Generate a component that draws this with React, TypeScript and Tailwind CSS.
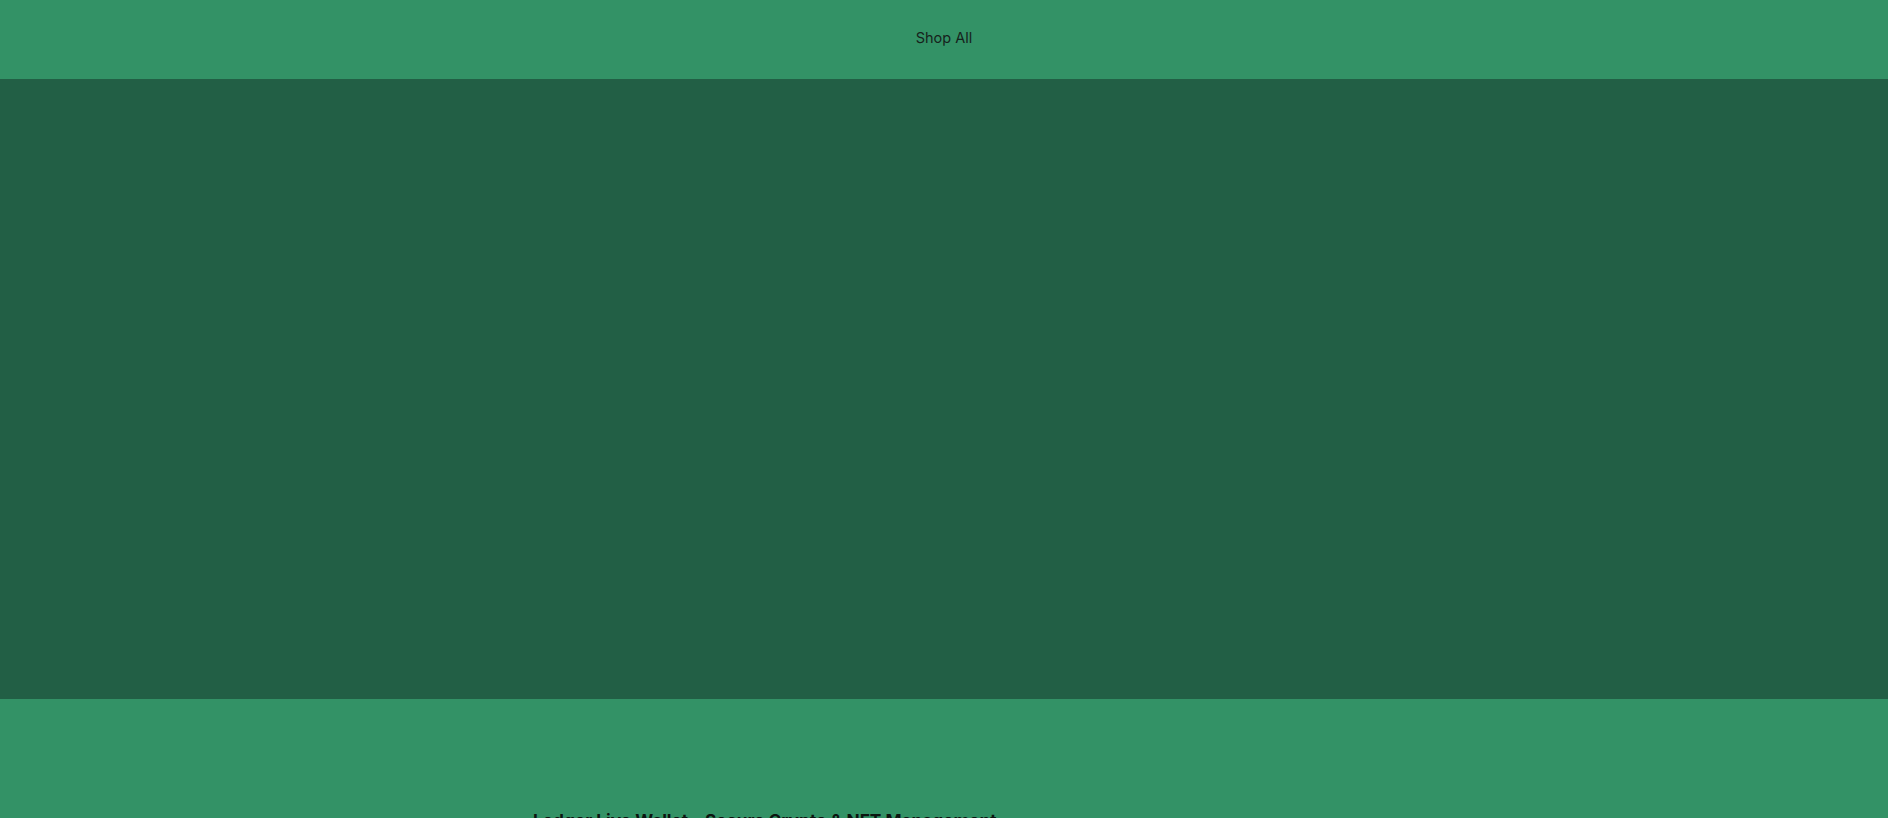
import React from "react";

export default function App() {
  return (
    <div className="min-h-screen w-full bg-[#339266]" style={{ fontFamily: "Inter, 'Noto Sans', sans-serif" }}>
      <header className="flex h-[79px] items-center justify-center bg-[#339266] pb-[4px]">
        <a className="text-[14.5px] text-[#16221c]">Shop All</a>
      </header>
      <section className="h-[620px] w-full bg-[#225f45]" />
      <section className="mx-auto w-[822px] pt-[109px]">
        <h1 className="text-[17.3px] font-bold leading-[26px] text-[#0c1510]">
          Ledger Live Wallet – Secure Crypto &amp; NFT Management
        </h1>
      </section>
    </div>
  );
}
